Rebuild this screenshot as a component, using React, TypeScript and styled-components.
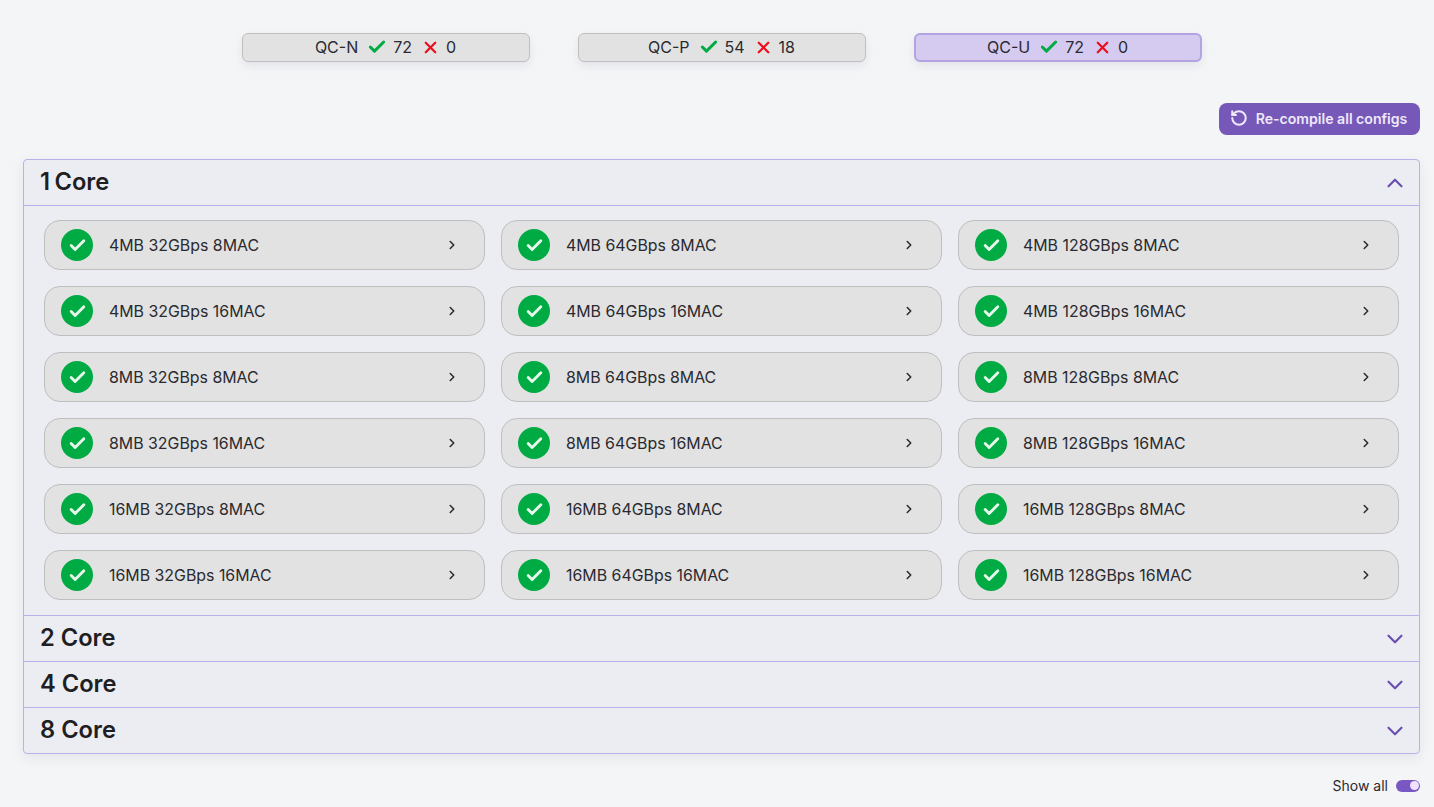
import React from 'react';
import styled, { createGlobalStyle } from 'styled-components';
import { Check, X, ChevronUp, ChevronDown, ChevronRight, RotateCcw } from 'lucide-react';

const GlobalStyle = createGlobalStyle`
  html, body {
    margin: 0;
    padding: 0;
    background: #f4f5f7;
    font-family: Inter, "Liberation Sans", sans-serif;
    color: #1f1f23;
  }
  * {
    box-sizing: border-box;
  }
`;

const summary = [
  { name: 'QC-N', pass: 72, fail: 0, active: false },
  { name: 'QC-P', pass: 54, fail: 18, active: false },
  { name: 'QC-U', pass: 72, fail: 0, active: true },
];

const sizes = ['4MB', '8MB', '16MB'];
const speeds = ['32GBps', '64GBps', '128GBps'];
const macs = ['8MAC', '16MAC'];

const rows = sizes.flatMap((size) =>
  macs.flatMap((mac) => speeds.map((speed) => `${size} ${speed} ${mac}`)),
);

const sections = ['1 Core', '2 Core', '4 Core', '8 Core'];

const App = () => {
  return (
    <Page>
      <GlobalStyle />
      <SummaryRow>
        {summary.map((item) => (
          <Pill key={item.name} $active={item.active}>
            <span>{item.name}</span>
            <PillGroup>
              <Check size={20} strokeWidth={3.6} color="#00ab44" />
              <span>{item.pass}</span>
            </PillGroup>
            <PillGroup>
              <X size={19} strokeWidth={2.8} color="#ee0d1c" />
              <span>{item.fail}</span>
            </PillGroup>
          </Pill>
        ))}
      </SummaryRow>

      <Toolbar>
        <RecompileButton>
          <RotateCcw size={18} strokeWidth={2.7} />
          Re-compile all configs
        </RecompileButton>
      </Toolbar>

      <Accordion>
        {sections.map((title, index) => (
          <Section key={title} $first={index === 0}>
            <SectionHeader>
              <SectionTitle $tight={index === 0}>{title}</SectionTitle>
              {index === 0 ? (
                <ChevronUp size={26} color="#6a4fb0" />
              ) : (
                <ChevronDown size={26} color="#6a4fb0" />
              )}
            </SectionHeader>
            {index === 0 && (
              <Panel>
                {rows.map((label) => (
                  <ConfigCard key={label}>
                    <StatusDot>
                      <Check size={19} strokeWidth={3.6} color="#e6f8ec" />
                    </StatusDot>
                    <ConfigLabel>{label}</ConfigLabel>
                    <ChevronRight size={14} strokeWidth={2.6} color="#2a2a30" />
                  </ConfigCard>
                ))}
              </Panel>
            )}
          </Section>
        ))}
      </Accordion>

      <Footer>
        Show all
        <Toggle>
          <ToggleKnob />
        </Toggle>
      </Footer>
    </Page>
  );
};

export default App;

const Page = styled.div`
  width: 1434px;
  height: 807px;
  overflow: hidden;
  padding: 33px 14px 0 23px;
`;

const SummaryRow = styled.div`
  display: flex;
  justify-content: center;
  gap: 48px;
`;

const Pill = styled.div<{ $active: boolean }>`
  width: 288px;
  height: 29px;
  display: flex;
  align-items: center;
  justify-content: center;
  gap: 9px;
  padding-bottom: 1px;
  font-size: 16px;
  color: #2a2a30;
  border-radius: 6px;
  border: ${(props) => (props.$active ? '2px solid #b3a3e0' : '1px solid #bfbfbf')};
  background-color: ${(props) => (props.$active ? '#d5caf0' : '#e2e2e2')};
  box-shadow: 0 4px 10px rgba(40, 40, 60, 0.08);
`;

const PillGroup = styled.div`
  display: flex;
  align-items: center;
  gap: 6px;
`;

const Toolbar = styled.div`
  display: flex;
  justify-content: flex-end;
  margin-top: 41px;
`;

const RecompileButton = styled.button`
  width: 201px;
  height: 32px;
  display: flex;
  align-items: center;
  justify-content: center;
  gap: 8px;
  padding: 0 2px 2px 0;
  border: none;
  border-radius: 8px;
  background-color: #7558b8;
  color: #efe8fb;
  font-family: inherit;
  font-size: 14.1px;
  font-weight: 600;
`;

const Accordion = styled.div`
  margin-top: 24px;
  height: 595px;
  border: 1px solid #bab1ea;
  border-radius: 4px;
  background-color: #ecedf2;
  box-shadow: 0 4px 14px rgba(40, 40, 60, 0.08);
`;

const Section = styled.div<{ $first: boolean }>`
  border-top: ${(props) => (props.$first ? 'none' : '1px solid #bab1ea')};
`;

const SectionHeader = styled.div`
  height: 45px;
  display: flex;
  align-items: center;
  justify-content: space-between;
  padding: 0 11px 0 16px;
`;

const SectionTitle = styled.h2<{ $tight: boolean }>`
  margin: 0 0 2px;
  font-size: 23.7px;
  font-weight: 600;
  color: #1f1f23;
  word-spacing: ${(props) => (props.$tight ? '-1.5px' : '0')};
`;

const Panel = styled.div`
  display: grid;
  grid-template-columns: repeat(3, 441px);
  grid-auto-rows: 50px;
  gap: 16px;
  padding: 14px 20px 15px;
  border-top: 1px solid #bab1ea;
`;

const ConfigCard = styled.div`
  display: flex;
  align-items: center;
  padding: 0 25px 0 16px;
  border: 1px solid #bfbfbf;
  border-radius: 16px;
  background-color: #e2e2e2;
`;

const StatusDot = styled.div`
  width: 32px;
  height: 32px;
  flex-shrink: 0;
  display: flex;
  align-items: center;
  justify-content: center;
  border-radius: 50%;
  background-color: #00ab44;
`;

const ConfigLabel = styled.span`
  flex: 1;
  margin-left: 16px;
  font-size: 15.9px;
  color: #2a2a30;
`;

const Footer = styled.div`
  display: flex;
  align-items: center;
  justify-content: flex-end;
  gap: 8px;
  margin-top: 23px;
  font-size: 14px;
  color: #2a2a30;
`;

const Toggle = styled.div`
  width: 24px;
  height: 12px;
  display: flex;
  align-items: center;
  justify-content: flex-end;
  padding-right: 1px;
  border-radius: 6px;
  background-color: #7a58c4;
`;

const ToggleKnob = styled.div`
  width: 9px;
  height: 9px;
  border-radius: 50%;
  background-color: #f0e2ff;
`;
